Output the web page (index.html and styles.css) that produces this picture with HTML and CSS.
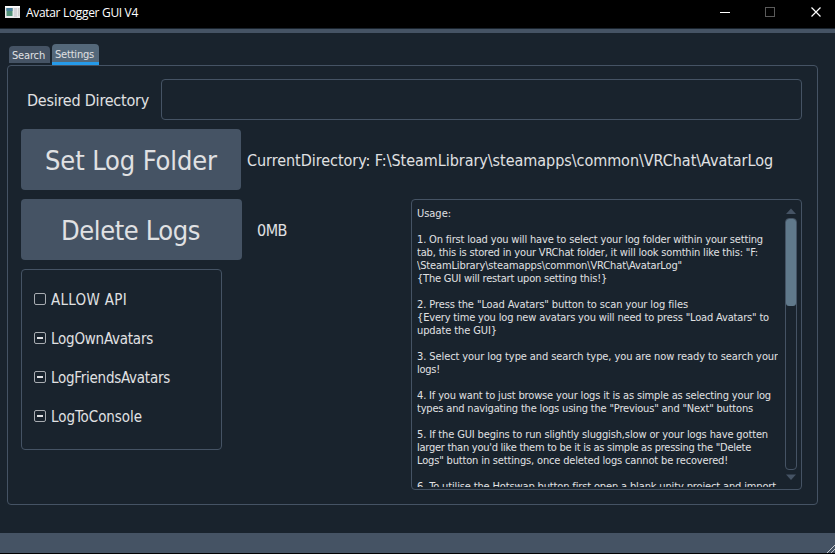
FILE: index.html
```html
<!DOCTYPE html>
<html lang="en">
<head>
<meta charset="utf-8">
<title>Avatar Logger GUI V4</title>
<link rel="stylesheet" href="styles.css">
</head>
<body>
<div class="window">
  <header class="titlebar">
    <svg class="app-icon" width="16" height="13" viewBox="0 0 16 13"><rect width="15" height="12" fill="#e8e8ea"/><rect y="0" width="15" height="1.500" fill="#fff"/><rect x="1.500" y="2" width="6" height="8" fill="#4f8f76"/><rect x="1.500" y="2" width="6" height="3" fill="#4a7f9c"/><rect x="9" y="2" width="3" height="9" fill="#d3d3d8"/><rect x="13" y="2" width="1.500" height="8" fill="#cfcfcf"/></svg>
    <span class="title" data-w="112">Avatar Logger GUI V4</span>
    <svg class="win-controls" width="110" height="28" viewBox="0 0 110 28" fill="none">
      <path d="M0 12.500h10" stroke="#fff"/>
      <rect x="45.500" y="7.500" width="9" height="9" stroke="#5a5a5a"/>
      <path d="M91.500 7.500l9 9M100.500 7.500l-9 9" stroke="#fff" stroke-width="1.200"/>
    </svg>
  </header>
  <div class="toolbar"></div>
  <main class="content">
    <nav class="tabs">
      <div class="tab"><span data-w="33">Search</span></div>
      <div class="tab active"><span data-w="39">Settings</span></div>
    </nav>
    <section class="pane">
      <div class="row directory">
        <label class="label" for="dir"><span data-w="122">Desired Directory</span></label>
        <input class="field" id="dir" type="text">
      </div>
      <div class="row current">
        <button class="button"><span data-w="172">Set Log Folder</span></button>
        <span class="label path"><span data-w="526">CurrentDirectory: F:\SteamLibrary\steamapps\common\VRChat\AvatarLog</span></span>
      </div>
      <div class="columns">
        <div class="left">
          <div class="row">
            <button class="button wide"><span data-w="139">Delete Logs</span></button>
            <span class="label size"><span data-w="30">0MB</span></span>
          </div>
          <div class="options">
            <div class="option"><i class="check"></i><span data-w="76">ALLOW API</span></div>
            <div class="option"><i class="check partial"></i><span data-w="102">LogOwnAvatars</span></div>
            <div class="option"><i class="check partial"></i><span data-w="119">LogFriendsAvatars</span></div>
            <div class="option"><i class="check partial"></i><span data-w="91">LogToConsole</span></div>
          </div>
        </div>
        <div class="usage">
          <div class="usage-text">
            <p><span data-w="34">Usage:</span></p>
            <p></p>
            <p><span data-w="346">1. On first load you will have to select your log folder within your setting</span></p>
            <p><span data-w="341">tab, this is stored in your VRChat folder, it will look somthin like this: "F:</span></p>
            <p><span data-w="265">\SteamLibrary\steamapps\common\VRChat\AvatarLog"</span></p>
            <p><span data-w="190">{The GUI will restart upon setting this!}</span></p>
            <p></p>
            <p><span data-w="271">2. Press the "Load Avatars" button to scan your log files</span></p>
            <p><span data-w="352">{Every time you log new avatars you will need to press "Load Avatars" to</span></p>
            <p><span data-w="80">update the GUI}</span></p>
            <p></p>
            <p><span data-w="361">3. Select your log type and search type, you are now ready to search your</span></p>
            <p><span data-w="23">logs!</span></p>
            <p></p>
            <p><span data-w="354">4. If you want to just browse your logs it is as simple as selecting your log</span></p>
            <p><span data-w="336">types and navigating the logs using the "Previous" and "Next" buttons</span></p>
            <p></p>
            <p><span data-w="351">5. If the GUI begins to run slightly sluggish,slow or your logs have gotten</span></p>
            <p><span data-w="334">larger than you'd like them to be it is as simple as pressing the "Delete</span></p>
            <p><span data-w="311">Logs" button in settings, once deleted logs cannot be recovered!</span></p>
            <p></p>
            <p><span data-w="359">6. To utilise the Hotswap button first open a blank unity project and import</span></p>
          </div>
          <div class="scrollbar">
            <svg width="12" height="18" viewBox="0 0 12 18"><path d="M1 14L6 8.500L11 14Z" fill="#455364"/></svg>
            <div class="track"><div class="thumb"></div></div>
            <svg width="12" height="19" viewBox="0 0 12 19"><path d="M1 4.500L6 10L11 4.500Z" fill="#455364"/></svg>
          </div>
        </div>
      </div>
    </section>
  </main>
  <footer class="statusbar">
    <svg width="9" height="9" viewBox="0 0 9 9" stroke="#c5c9ce" fill="none"><path d="M1 9L9 1M5 9L9 5"/></svg>
  </footer>
</div>
<script src="fit.js"></script>
</body>
</html>
```
FILE: styles.css
```css
* { box-sizing: border-box; }
body {
  margin: 0;
  background: #000;
  color: #e0e1e3;
  font-family: "DejaVu Sans Condensed", "DejaVu Sans", sans-serif;
  font-stretch: condensed;
  font-size: 11px;
  overflow: hidden;
}
.window { width: 835px; height: 554px; display: flex; flex-direction: column; background: #19232d; box-shadow: inset 0 -1px #000; white-space: nowrap; }
.titlebar { height: 28px; background: #000; display: flex; align-items: flex-start; }
.app-icon { margin: 6px 5px 0; flex: none; }
.title { font: 12px/26px "Open Sans", sans-serif; color: #fff; }
.win-controls { margin-left: auto; margin-right: 5px; }
.toolbar { height: 4px; margin-top: 1px; background: #455364; }
.content { flex: 1; padding: 11px 17px 28px 7px; display: flex; flex-direction: column; }
.tabs { display: flex; gap: 2px; align-items: flex-end; height: 21px; padding-left: 2px; }
.tab { width: 41px; height: 17px; margin-bottom: 2px; padding-left: 3px; line-height: 19px; background: #455364; border-radius: 4px 4px 0 0; }
.tab.active { width: 47px; height: 21px; margin-bottom: 0; line-height: 21px; background: #54687a; border-bottom: 3px solid #259ae9; }
.pane { flex: 1; border: 1px solid #455364; border-radius: 4px; padding: 13px 15px 14px 13px; display: flex; flex-direction: column; gap: 9px; }
.row { display: flex; align-items: center; }
.label { font-size: 16px; padding-top: 2px; }
.directory { height: 41px; }
.directory .label { width: 140px; padding-left: 6px; }
.field { flex: 1; height: 41px; background: transparent; border: 1px solid #455364; border-radius: 4px; color: inherit; outline: none; }
.button { width: 220px; height: 61px; border: 0; border-radius: 4px; background: #455364; color: inherit; font: inherit; font-size: 27px; padding: 2px 0 0; text-align: center; }
.button.wide { width: 221px; padding-right: 2px; }
.path { margin-left: 6px; }
.size { margin-left: 15px; }
.columns { flex: 1; display: flex; justify-content: space-between; min-height: 0; }
.left { display: flex; flex-direction: column; gap: 9px; }
.options { width: 201px; height: 181px; border: 1px solid #455364; border-radius: 4px; padding: 10px 12px; }
.option { height: 39px; display: flex; align-items: center; gap: 5px; font-size: 15px; }
.check { width: 12px; height: 12px; margin-bottom: 1px; border: 1px solid #a8acb1; border-radius: 2px; display: flex; align-items: center; justify-content: center; }
.partial::before { content: ""; width: 6px; height: 2px; background: #e0e1e3; }
.usage { width: 391px; height: 291px; border: 1px solid #455364; border-radius: 4px; display: flex; justify-content: space-between; padding: 2px 4px 2px 5px; }
.usage-text { padding-top: 5px; overflow: hidden; }
.usage-text p { margin: 0; height: 13px; line-height: 13px; }
.scrollbar { width: 12px; display: flex; flex-direction: column; margin-top: -2px; margin-bottom: -2px; }
.track { flex: 1; border: 1px solid #455364; border-radius: 4px; }
.thumb { height: 87px; background: #60798b; border-radius: 3px; }
.statusbar { height: 20px; margin-bottom: 1px; background: #455364; display: flex; justify-content: flex-end; align-items: flex-end; }
```
FILE: fit.js
```js
// Spread each label's letters to its nominal Tahoma width.
document.querySelectorAll("[data-w]").forEach(function (el) {
  var natural = el.getBoundingClientRect().width;
  var gap = (Number(el.dataset.w) - natural) / el.textContent.length;
  el.style.letterSpacing = gap + "px";
});
```
